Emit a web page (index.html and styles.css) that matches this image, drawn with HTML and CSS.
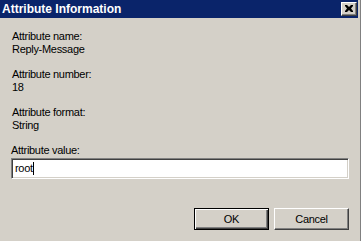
FILE: index.html
```html
<!DOCTYPE html>
<html>
<head>
<meta charset="utf-8">
<link rel="stylesheet" href="styles.css">
</head>
<body>
<div class="window">
  <div class="main">
    <div class="titlebar">
      <span class="title">Attribute Information</span>
      <span class="close">
        <svg width="8" height="7" viewBox="0 0 8 7"><path d="M0 0h2l2 2 2-2h2v1L6 3.5 8 6v1H6L4 5 2 7H0V6l2-2.5L0 1z" fill="#000"/></svg>
      </span>
    </div>
    <div class="content">
      <div class="group">
        <div class="line">Attribute name:</div>
        <div class="line">Reply-Message</div>
      </div>
      <div class="group">
        <div class="line">Attribute number:</div>
        <div class="line">18</div>
      </div>
      <div class="group">
        <div class="line">Attribute format:</div>
        <div class="line">String</div>
      </div>
      <div class="line value-label">Attribute value:</div>
      <div class="input"><span class="text">root</span><span class="caret"></span></div>
      <div class="buttons">
        <div class="btn default"><span>OK</span></div>
        <div class="btn"><span>Cancel</span></div>
      </div>
    </div>
  </div>
  <div class="frame"></div>
</div>
</body>
</html>
```
FILE: styles.css
```css
html, body {
  margin: 0;
  padding: 0;
  background: #d4d0c8;
}
body {
  font-family: "Liberation Sans", Arial, sans-serif;
  font-size: 11px;
  letter-spacing: -0.3px;
  color: #000;
}
.window {
  display: flex;
  width: 361px;
  height: 241px;
  overflow: hidden;
}
.main {
  width: 358px;
  display: flex;
  flex-direction: column;
}
.frame {
  width: 3px;
  box-sizing: border-box;
  border-left: 2px solid #d4d0c8;
  border-right: 1px solid #808080;
}
.titlebar {
  height: 18px;
  background: #0a246a;
  display: flex;
  align-items: center;
  justify-content: space-between;
  padding: 0 1px 0 2px;
}
.title {
  color: #fff;
  font-weight: bold;
  font-size: 12px;
  letter-spacing: 0;
  line-height: 14px;
}
.close {
  width: 16px;
  height: 14px;
  box-sizing: border-box;
  background: #d4d0c8;
  border-top: 1px solid #fff;
  border-left: 1px solid #fff;
  border-right: 1px solid #404040;
  border-bottom: 1px solid #404040;
  box-shadow: inset -1px -1px 0 #808080;
  display: flex;
  align-items: center;
  justify-content: center;
  padding: 0 1px 1px 0;
}
.close svg { display: block; }
.content {
  padding: 12px 9px 0 11px;
  display: flex;
  flex-direction: column;
}
.group {
  padding-left: 1px;
  margin-bottom: 12px;
}
.line {
  line-height: 13px;
  height: 13px;
  white-space: nowrap;
}
.input {
  margin-top: 1px;
  height: 21px;
  box-sizing: border-box;
  background: #fff;
  border-top: 1px solid #808080;
  border-left: 1px solid #808080;
  border-right: 1px solid #fff;
  border-bottom: 1px solid #fff;
  box-shadow: inset 1px 1px 0 #404040, inset -1px -1px 0 #d4d0c8;
  display: flex;
  align-items: center;
  padding-left: 3px;
}
.text {
  line-height: 13px;
}
.caret {
  width: 1px;
  height: 13px;
  background: #000;
}
.buttons {
  margin-top: 29px;
  display: flex;
  justify-content: flex-end;
  gap: 5px;
}
.btn {
  width: 75px;
  height: 22px;
  box-sizing: border-box;
  background: #d4d0c8;
  border-top: 1px solid #fff;
  border-left: 1px solid #fff;
  border-right: 1px solid #404040;
  border-bottom: 1px solid #404040;
  box-shadow: inset -1px -1px 0 #808080;
  display: flex;
  align-items: center;
  justify-content: center;
  line-height: 13px;
}
.btn.default {
  border: 1px solid #000;
  box-shadow: inset 1px 1px 0 #fff, inset -1px -1px 0 #404040, inset -2px -2px 0 #808080;
}
```
